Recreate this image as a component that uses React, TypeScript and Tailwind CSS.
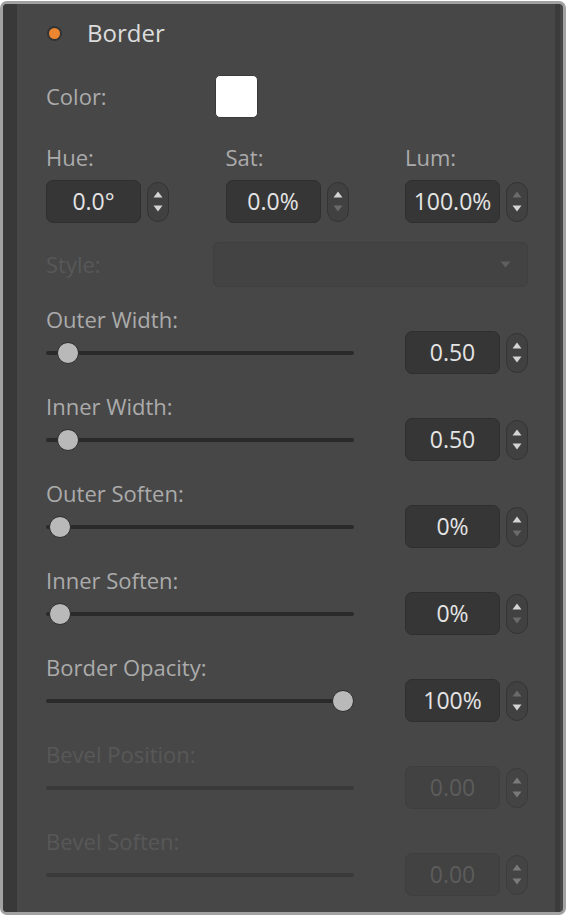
import React from "react";

const font = { fontFamily: '"Open Sans", "Noto Sans", sans-serif' };

function Tri({ dir, color }: { dir: "up" | "down"; color: string }) {
  return (
    <svg width="10" height="7" viewBox="0 0 10 7">
      {dir === "up" ? (
        <path d="M5 0.5 L9.5 6.5 L0.5 6.5 Z" fill={color} />
      ) : (
        <path d="M0.5 0.5 L9.5 0.5 L5 6.5 Z" fill={color} />
      )}
    </svg>
  );
}

function Stepper({ up = true, down = true, disabled = false }: { up?: boolean; down?: boolean; disabled?: boolean }) {
  const on = disabled ? "#7a7a7a" : "#d4d4d4";
  const off = "#6a6a6a";
  return (
    <div
      className={`w-[22px] h-[40px] rounded-full border flex flex-col items-center justify-center gap-[7px] ${
        disabled ? "border-[#3c3c3c] bg-[#444444]" : "border-[#343434] bg-[#414141]"
      }`}
    >
      <Tri dir="up" color={up ? on : off} />
      <Tri dir="down" color={down ? on : off} />
    </div>
  );
}

function NumBox({ value, disabled = false }: { value: string; disabled?: boolean }) {
  return (
    <div
      className={`w-[95px] h-[43px] rounded-[7px] border flex items-center justify-center text-[23px] ${
        disabled ? "bg-[#424242] border-[#3e3e3e] text-[#5c5c5c]" : "bg-[#363636] border-[#2f2f2f] text-[#e4e4e4]"
      }`}
    >
      {value}
    </div>
  );
}

function Field({ value, up, down, disabled }: { value: string; up?: boolean; down?: boolean; disabled?: boolean }) {
  return (
    <div className="flex items-center gap-[6px]">
      <NumBox value={value} disabled={disabled} />
      <Stepper up={up} down={down} disabled={disabled} />
    </div>
  );
}

type SliderRow = {
  label: string;
  value: string;
  thumb?: number;
  up?: boolean;
  down?: boolean;
  disabled?: boolean;
};

const sliders: SliderRow[] = [
  { label: "Outer Width:", value: "0.50", thumb: 11 },
  { label: "Inner Width:", value: "0.50", thumb: 11 },
  { label: "Outer Soften:", value: "0%", thumb: 3, down: false },
  { label: "Inner Soften:", value: "0%", thumb: 3, down: false },
  { label: "Border Opacity:", value: "100%", thumb: 286, up: false },
  { label: "Bevel Position:", value: "0.00", disabled: true },
  { label: "Bevel Soften:", value: "0.00", disabled: true },
];

function Slider({ row }: { row: SliderRow }) {
  return (
    <div className="mt-[20px] first:mt-[19px]">
      <div className={`h-[24px] leading-[24px] text-[22px] ${row.disabled ? "text-[#585858]" : "text-[#ababab]"}`}>
        {row.label}
      </div>
      <div className="h-[43px] flex items-center">
        <div className="relative w-[308px] h-[4px]">
          <div className={`w-full h-full rounded-full ${row.disabled ? "bg-[#3a3a3a]" : "bg-[#2a2a2a]"}`} />
          {row.thumb !== undefined && (
            <div
              className="absolute top-[-9px] w-[22px] h-[22px] rounded-full bg-[#b9b9b9] border border-[#2c2c2c]"
              style={{ left: row.thumb }}
            />
          )}
        </div>
        <div className="ml-auto">
          <Field value={row.value} up={row.up ?? true} down={row.down ?? true} disabled={row.disabled} />
        </div>
      </div>
    </div>
  );
}

export default function App() {
  return (
    <div className="w-[568px] h-[917px] bg-white pt-[1px]" style={font}>
      <div className="w-[566px] h-[914px] rounded-[7px] border-[3px] border-[#a2a2a2] bg-[#474747] flex overflow-hidden">
        <div className="w-[14px] bg-[#393939]" />
        <div className="flex-1 pl-[29px] pr-[27px] pt-[8px]">
          {/* Header */}
          <div className="h-[42px] flex items-center">
            <div className="w-[15px] h-[15px] rounded-full bg-[#ec8630] border-2 border-[#333333] ml-[1px]" />
            <div className="ml-[25px] text-[24px] text-[#dcdcdc]">Border</div>
          </div>

          {/* Color */}
          <div className="mt-[20px] h-[44px] flex items-center">
            <div className="w-[169px] text-[22px] text-[#ababab]">Color:</div>
            <div className="w-[43px] h-[43px] rounded-[5px] bg-white border border-[#3a3a3a]" />
          </div>

          {/* HSL */}
          <div className="mt-[27px] flex justify-between">
            {[
              { l: "Hue:", v: "0.0°", up: true, down: true },
              { l: "Sat:", v: "0.0%", up: true, down: false },
              { l: "Lum:", v: "100.0%", up: false, down: true },
            ].map((f) => (
              <div key={f.l} className="flex flex-col">
                <div className="h-[24px] leading-[24px] text-[22px] text-[#ababab]">{f.l}</div>
                <div className="mt-[11px]">
                  <Field value={f.v} up={f.up} down={f.down} />
                </div>
              </div>
            ))}
          </div>

          {/* Style */}
          <div className="mt-[19px] h-[45px] flex items-center">
            <div className="w-[167px] text-[22px] text-[#585858]">Style:</div>
            <div className="flex-1 h-[45px] rounded-[6px] bg-[#434343] border border-[#3f3f3f] flex items-center justify-end pr-[16px]">
              <svg width="11" height="7" viewBox="0 0 11 7">
                <path d="M0.5 0.5 L10.5 0.5 L5.5 6.5 Z" fill="#5f5f5f" />
              </svg>
            </div>
          </div>

          {sliders.map((s) => (
            <Slider key={s.label} row={s} />
          ))}
        </div>
        <div className="w-[5px] bg-[#3b3b3b]" />
        <div className="w-[3px]" />
      </div>
    </div>
  );
}
